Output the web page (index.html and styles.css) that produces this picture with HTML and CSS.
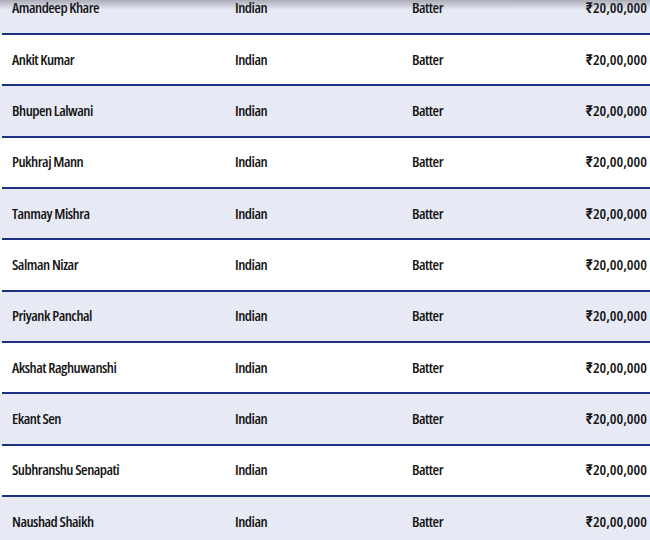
FILE: index.html
```html
<!DOCTYPE html>
<html>
<head>
<meta charset="utf-8">
<link rel="stylesheet" href="styles.css">
</head>
<body>
<div class="table">
  <div class="row alt"><span class="name">Amandeep Khare</span><span>Indian</span><span>Batter</span><span class="price">₹20,00,000</span></div>
  <div class="row"><span class="name">Ankit Kumar</span><span>Indian</span><span>Batter</span><span class="price">₹20,00,000</span></div>
  <div class="row alt"><span class="name">Bhupen Lalwani</span><span>Indian</span><span>Batter</span><span class="price">₹20,00,000</span></div>
  <div class="row"><span class="name">Pukhraj Mann</span><span>Indian</span><span>Batter</span><span class="price">₹20,00,000</span></div>
  <div class="row alt"><span class="name">Tanmay Mishra</span><span>Indian</span><span>Batter</span><span class="price">₹20,00,000</span></div>
  <div class="row"><span class="name">Salman Nizar</span><span>Indian</span><span>Batter</span><span class="price">₹20,00,000</span></div>
  <div class="row alt"><span class="name">Priyank Panchal</span><span>Indian</span><span>Batter</span><span class="price">₹20,00,000</span></div>
  <div class="row"><span class="name">Akshat Raghuwanshi</span><span>Indian</span><span>Batter</span><span class="price">₹20,00,000</span></div>
  <div class="row alt"><span class="name">Ekant Sen</span><span>Indian</span><span>Batter</span><span class="price">₹20,00,000</span></div>
  <div class="row"><span class="name">Subhranshu Senapati</span><span>Indian</span><span>Batter</span><span class="price">₹20,00,000</span></div>
  <div class="row alt"><span class="name">Naushad Shaikh</span><span>Indian</span><span>Batter</span><span class="price">₹20,00,000</span></div>
</div>
</body>
</html>
```
FILE: styles.css
```css
html, body {
  margin: 0;
  padding: 0;
  background: #ffffff;
  overflow: hidden;
}

.table {
  position: relative;
  margin-top: -16.3px;
  font-family: "Open Sans", Roboto, sans-serif;
  font-stretch: condensed;
  font-weight: 600;
  font-size: 15px;
  line-height: 15px;
  letter-spacing: -0.5px;
  color: #141414;
}

.table::before {
  content: "";
  position: absolute;
  left: 0;
  right: 0;
  top: 16.3px;
  height: 10px;
  background: linear-gradient(rgba(60, 60, 70, 0.35), rgba(60, 60, 70, 0));
  z-index: 2;
}

.row {
  display: grid;
  grid-template-columns: 223px 177px 1fr auto;
  align-items: center;
  height: 51.33px;
  box-sizing: border-box;
  padding: 0 3px 3px 12px;
  background: linear-gradient(#1e3080, #1e3080) 2px 100% / calc(100% - 2px) 2px no-repeat, #ffffff;
}

.row.alt {
  background: linear-gradient(#1e3080, #1e3080) 2px 100% / calc(100% - 2px) 2px no-repeat, #e7e9f5;
}

.price {
  text-align: right;
  letter-spacing: 0;
}
```
